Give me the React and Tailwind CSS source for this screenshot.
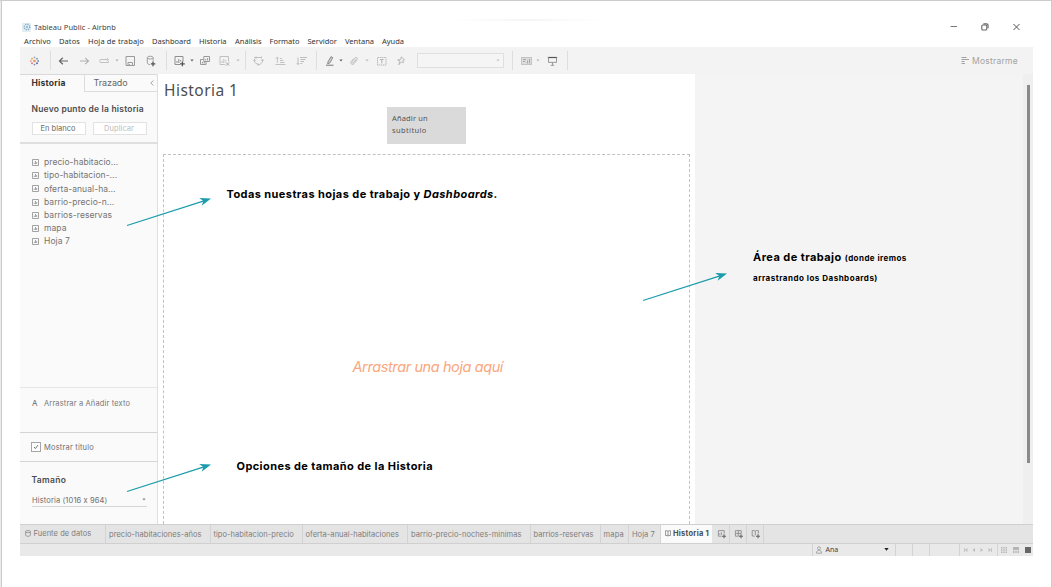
import React from "react";

const menu = [
  ["Archivo", "w-[35px] tracking-[0.1px]"],
  ["Datos", "w-[29px] tracking-[0.09px]"],
  ["Hoja de trabajo", "w-[64px] tracking-[0.12px]"],
  ["Dashboard", "w-[47px]"],
  ["Historia", "w-[36px]"],
  ["Análisis", "w-[34.5px]"],
  ["Formato", "w-[38px]"],
  ["Servidor", "w-[37.5px]"],
  ["Ventana", "w-[37px]"],
  ["Ayuda", "w-[30px]"],
];

const sheets = [
  "precio-habitacio...",
  "tipo-habitacion-...",
  "oferta-anual-ha...",
  "barrio-precio-n...",
  "barrios-reservas",
  "mapa",
  "Hoja 7",
];

const tabs = [
  ["precio-habitaciones-años", "w-[104.5px] pl-[3px]"],
  ["tipo-habitacion-precio", "w-[92px] pl-[3px]"],
  ["oferta-anual-habitaciones", "w-[105.5px] pl-[3px]"],
  ["barrio-precio-noches-minimas", "w-[122.5px] pl-[3px]"],
  ["barrios-reservas", "w-[70px] pl-[3px]"],
  ["mapa", "w-[28.5px] pl-[3px] tracking-[0.2px]"],
  ["Hoja 7", "w-[32px] pl-[3px]"],
];

function Sep({ className }) {
  return <div className={`h-[19px] w-px shrink-0 bg-[#dedede] ${className}`} />;
}

function Ico({ className, children, w = 11 }) {
  return (
    <svg
      viewBox={`0 0 ${w} 12`}
      width={w}
      height="12"
      className={`shrink-0 ${className}`}
      fill="none"
      stroke="currentColor"
      strokeWidth="1"
    >
      {children}
    </svg>
  );
}

function Caret({ className }) {
  return (
    <svg viewBox="0 0 4 3" width="4" height="3" className={`shrink-0 ${className}`} fill="currentColor">
      <path d="M0.3 0.6h3.4L2 2.5z" />
    </svg>
  );
}

function Toolbar() {
  return (
    <div className="flex h-[27px] items-center bg-[#f3f3f3] pl-[9px] pr-[15px]">
      <Ico className="opacity-75">
        <g stroke="none">
          <circle cx="5.5" cy="6" r="1.3" fill="#e8762c" />
          <circle cx="5.5" cy="2.4" r="0.9" fill="#7099a6" />
          <circle cx="5.5" cy="9.6" r="0.9" fill="#5b6591" />
          <circle cx="3" cy="3.7" r="1" fill="#eb912c" />
          <circle cx="8" cy="3.7" r="1" fill="#59879b" />
          <circle cx="3" cy="8.3" r="1" fill="#d9536a" />
          <circle cx="8" cy="8.3" r="1" fill="#1f457e" />
          <circle cx="1.8" cy="6" r="0.9" fill="#e58a80" />
          <circle cx="9.2" cy="6" r="0.9" fill="#5b6591" />
        </g>
      </Ico>
      <Sep className="ml-[10px]" />
      <Ico className="ml-[7px] text-[#666]">
        <path d="M10 6H1.5M4.8 2.8L1.5 6L4.8 9.2" strokeWidth="1.2" />
      </Ico>
      <Ico className="ml-[10px] text-[#b0b0b0]">
        <path d="M1 6h8.5M6.2 2.8L9.5 6L6.2 9.2" strokeWidth="1.1" />
      </Ico>
      <Ico className="ml-[9px] text-[#c2c2c2]">
        <path d="M7 7.5H1.6Q0.8 7.5 0.8 6.8V5.3Q0.8 4.5 1.6 4.5H8.6" />
        <path d="M7.8 2.7L10 4.5L7.8 6.3z" fill="currentColor" stroke="none" />
        <path d="M6.5 7.5h3V6" />
      </Ico>
      <Caret className="ml-[5px] text-[#b5b5b5]" />
      <Ico className="ml-[6px] text-[#9a9a9a]" w={10}>
        <path d="M1 1.5h8.5v9H1zM3 10.5v-3h4.5v3M4.5 10.5v-1.5" />
      </Ico>
      <Ico className="ml-[11px] text-[#a0a0a0]" w={10}>
        <ellipse cx="4.2" cy="2.6" rx="2.9" ry="1.4" />
        <path d="M1.3 2.4v5.6c0 .8 1.2 1.4 2.7 1.6M7.1 2.4v3.4" />
        <path d="M7 6.4v4.8M4.9 8.8h4.4" stroke="#555" strokeWidth="1.3" />
      </Ico>
      <Sep className="ml-[10px]" />
      <Ico className="ml-[7px] text-[#8f8f8f]">
        <path d="M6 9.5H1v-8h8v5M3 8V6M4.8 8V4M6.6 6.5V5" />
        <path d="M8.4 6.4v4.8M6 8.8h4.8" stroke="#555" strokeWidth="1.3" />
      </Ico>
      <Caret className="ml-[5px] text-[#666]" />
      <Ico className="ml-[6px] text-[#9a9a9a]" w={10}>
        <path d="M3.8 1.5h5.7v5H3.8zM5.7 5.5V4M7.6 5.5V3" />
        <path d="M3.5 4.5h-3v5h5.5v-3M2.5 8.5V7M4.2 8.5V7" />
      </Ico>
      <Ico className="ml-[9px] text-[#c0c0c0]">
        <path d="M6 9.5H1v-8h8.5v5M3 8V6M4.8 8V4M6.8 6.5V5" />
        <path d="M7 7.4l3.2 3.2M10.2 7.4L7 10.6" stroke="#a6a6a6" />
      </Ico>
      <Caret className="ml-[6px] text-[#c0c0c0]" />
      <Sep className="ml-[5px]" />
      <Ico className="ml-[7px] text-[#c0c0c0]">
        <path d="M1 2.5h7.5M3 1.5v2.4M8.5 1.5v2M1.5 4v3.2L4.8 9.5M9.5 4.5v2.5L7 9.4M0 5.8l1.5-1.5L3 5.8M8 5.8l1.5-1.5L11 5.8M4 9.5h3M5 8.2v2.6" />
      </Ico>
      <Ico className="ml-[11px] text-[#c2c2c2]">
        <path d="M0.5 9.5h10M2.3 2v6M1 3.6L2.3 2L3.6 3.6M5 3.5h2M5 5.5h3.4M5 7.5h4.6" />
      </Ico>
      <Ico className="ml-[10px] text-[#bdbdbd]">
        <path d="M2 2.5v7M0.7 8L2 9.5L3.3 8M4 2.5h7M4.5 4.5h5M4.5 6.5h3.5M4.5 8.5h1.8" />
      </Ico>
      <Sep className="ml-[9px]" />
      <Ico className="ml-[8px] text-[#8c8c8c]" w={10}>
        <path d="M3 6.8L6 1.6L7.8 2.6L5 7.8L2.6 8.8z" fill="currentColor" fillOpacity=".35" />
        <path d="M1 10.3h7.5" stroke="#a0a0a0" strokeWidth="1.5" />
      </Ico>
      <Caret className="ml-[4px] text-[#666]" />
      <Ico className="ml-[6px] text-[#c0c0c0]" w={10}>
        <path d="M7.2 4.2L4.4 7.8C3.6 8.8 2.3 7.8 3 6.9L6 3C7.2 1.6 9.2 3 8.2 4.5L5 8.7C3.4 10.5 0.8 8.8 2.2 6.6L4.6 3.6" />
      </Ico>
      <Caret className="ml-[6px] text-[#c0c0c0]" />
      <Ico className="ml-[7px] text-[#b8b8b8]">
        <rect x="1.5" y="2.5" width="8.5" height="7.5" strokeDasharray="1.4 .6" />
        <path d="M3.9 4.5h3.8M5.8 4.5v3.9" strokeWidth="1.1" />
      </Ico>
      <Ico className="ml-[9px] text-[#b8b8b8]" w={10}>
        <path d="M5.2 1.8L8.6 4.8L7 5.2L7.3 7.8L5.6 6.8L2.6 9.8L4 6.2L1.6 5L4.8 4.4z" />
      </Ico>
      <div className="ml-[11px] flex h-[15px] w-[87px] shrink-0 items-center justify-end border border-[#dfdfdf] bg-[#f5f5f5] pr-[3px]">
        <Caret className="text-[#c6c6c6]" />
      </div>
      <Sep className="ml-[8px]" />
      <Ico className="ml-[8px] text-[#c4c4c4]">
        <rect x="0.5" y="2.5" width="10" height="7" fill="#dcdcdc" />
        <path d="M2 4.5h3M2 6.5h2M6.5 8.5v-3M8.5 8.5V4" stroke="#a8a8a8" />
      </Ico>
      <Caret className="ml-[4px] text-[#bbb]" />
      <Ico className="ml-[7px] text-[#999]">
        <path d="M0.8 2.5h9.4" stroke="#555" strokeWidth="1.2" />
        <path d="M1.5 2.5v4.9h8V2.5M5.5 7.5v2.5M3.8 10.3h3.4" />
      </Ico>
      <Sep className="ml-[9px]" />
      <div className="ml-auto flex items-center gap-[3px] text-[8.5px] leading-[12px] tracking-[0.25px] text-[#a3a3a3]">
        <svg width="8" height="9" viewBox="0 0 8 9" stroke="#a3a3a3">
          <path d="M0.5 1.5h5M0.5 3.5h7.5M0.5 5.5h3M0.5 7.5h3.5" />
        </svg>
        <span className="pt-px">Mostrarme</span>
      </div>
    </div>
  );
}

function Sidebar() {
  return (
    <div className="flex w-[138px] shrink-0 flex-col border-r border-[#dfdfdf] bg-[#fafafa] text-[#666]">
      <div className="flex h-[18px] border-t border-[#d9d9d9]">
        <div className="w-[64px] pl-[11.5px] text-[8.5px] leading-[17px] font-bold tracking-[0.2px] text-[#333]">Historia</div>
        <div className="flex flex-1 items-center justify-between border-b border-l border-[#dcdcdc] pr-[3px] pl-[8.5px] text-[9px] leading-[16px] text-[#666]">
          <span className="tracking-[-0.08px]">Trazado</span>
          <svg width="4" height="6" viewBox="0 0 4 6" fill="none" stroke="#999" strokeWidth=".9">
            <path d="M3.3 0.5L0.8 3l2.5 2.5" />
          </svg>
        </div>
      </div>
      <div className="mt-[11px] pl-[11.5px] text-[8.5px] leading-[12px] font-semibold tracking-[0.2px] text-[#4c4c4c]">Nuevo punto de la historia</div>
      <div className="mt-[7px] flex gap-[7px] pl-[11.5px] text-[7.5px]">
        <div className="flex h-[13px] w-[54px] items-center justify-center border border-[#e2e2e2] bg-white pr-px text-[#666]">En blanco</div>
        <div className="flex h-[13px] w-[54px] items-center justify-center border border-[#e2e2e2] bg-white pr-px tracking-[0.07px] text-[#bdbdbd]">Duplicar</div>
      </div>
      <div className="mt-[7px] h-[2px] bg-[#dfdfdf]" />
      <div className="mt-[12px] flex flex-col pl-[12px]">
        {sheets.map((s) => (
          <div key={s} className="flex h-[13.2px] items-center gap-[5px] text-[8.5px] tracking-[0.06px] text-[#747474]">
            <svg width="7" height="7" viewBox="0 0 7 7" fill="none" stroke="#999" strokeWidth=".9">
              <path d="M0.5 0.5h6v6h-6zM2.3 5V3.8M3.5 5V2M4.7 5V3" />
            </svg>
            {s}
          </div>
        ))}
      </div>
      <div className="mt-[138.6px] flex h-[45px] border-t border-[#e6e6e6] pt-[10px] pl-[12px] text-[7.5px] leading-[12px]">
        <span className="w-[12px] text-[8px] leading-[11px] text-[#666]">A</span>
        <span className="tracking-[0.14px] text-[#777]">Arrastrar a Añadir texto</span>
      </div>
      <div className="flex h-[30px] items-center border-t border-b border-[#d4d4d4] pl-[11px] text-[7.5px] leading-[12px] tracking-[0.2px] text-[#707070]">
        <span className="mr-[3px] flex h-[10px] w-[10px] items-center justify-center border border-[#a6a6a6] bg-white">
          <svg width="6" height="6" viewBox="0 0 6 6" fill="none" stroke="#666" strokeWidth=".9">
            <path d="M1 3l1.4 1.6L5 1" />
          </svg>
        </span>
        <span className="pt-[2px]">Mostrar título</span>
      </div>
      <div className="mt-[12px] pl-[11.5px] text-[8.5px] leading-[12px] font-semibold tracking-[0.35px] text-[#4c4c4c]">Tamaño</div>
      <div className="mt-[7px] ml-[12px] flex h-[14px] w-[115px] items-center justify-between border-b border-[#d5d5d5] pr-[1px] text-[7.5px] leading-[12px] text-[#6c6c6c]">
        <span className="pt-[3px] tracking-[0.13px] [font-feature-settings:'calt'_0]">Historia (1016 x 964)</span>
        <Caret className="text-[#888]" />
      </div>
    </div>
  );
}

function NewTab({ className, children }) {
  return (
    <div className={`flex items-center justify-center border-r border-[#d3d3d3] pl-[2px] ${className}`}>
      <svg width="10" height="10" viewBox="0 0 10 10" fill="none" stroke="#8c8c8c" strokeWidth=".9">
        {children}
        <path d="M7 5.2v4M5 7.2h4" stroke="#666" strokeWidth="1.1" />
      </svg>
    </div>
  );
}

function TabStrip() {
  return (
    <div className="flex h-[19.5px] border-t border-b border-[#d0d0d0] bg-[#e4e4e4] text-[7.5px] leading-[20px] tracking-[0.05px] whitespace-nowrap text-[#7c7c7c]">
      <div className="flex w-[86px] items-center gap-[2.5px] border-r border-[#d3d3d3] pl-[5px]">
        <svg width="6" height="7" viewBox="0 0 6 7" fill="none" stroke="#8c8c8c" strokeWidth=".8">
          <ellipse cx="3" cy="1.6" rx="2.4" ry="1.1" />
          <path d="M0.6 1.6v3.6c0 1.5 4.8 1.5 4.8 0V1.6" />
        </svg>
        <span className="pt-px">Fuente de datos</span>
      </div>
      {tabs.map(([label, cls]) => (
        <div key={label} className={`shrink-0 border-r border-[#d3d3d3] ${cls}`}>
          {label}
        </div>
      ))}
      <div className="flex w-[51px] shrink-0 items-center gap-[2px] bg-[#fafafa] pl-[4px] font-bold tracking-[0.24px] text-[#4c4c4c]">
        <svg width="6" height="7" viewBox="0 0 6 7" fill="none" stroke="#777" strokeWidth=".8">
          <path d="M0.4 0.8h1.8L3 1.4l.8-.6h1.8v4.6H3.8L3 6.2l-.8-.8H0.4zM3 1.4v4.8" />
        </svg>
        <span className="pt-px">Historia 1</span>
      </div>
      <NewTab className="ml-px w-[17px]">
        <path d="M4.5 7.2H1.4V1.6h5.8v3M2.8 5.8V4.4M4.4 5.8V3.2" />
      </NewTab>
      <NewTab className="w-[17px]">
        <path d="M4.5 7.2H1.4V1.6h5.8v3M1.4 4.4h5.8M4.3 1.6v5.6" />
      </NewTab>
      <NewTab className="w-[17px]">
        <path d="M3.8 7.5L3.2 7H1.2V1.6h2.2l.9.6.9-.6h2.2v3M4.3 2.2v4" />
      </NewTab>
    </div>
  );
}

function StatusBar() {
  return (
    <div className="flex h-[12px] justify-end bg-[#e9e9e9] text-[7px]">
      <div className="flex w-[83px] items-center border-l border-[#d3d3d3] pl-[3px] text-[#444]">
        <svg width="6" height="8" viewBox="0 0 6 8" fill="none" stroke="#999" strokeWidth=".8">
          <circle cx="3" cy="2.3" r="1.5" />
          <path d="M0.5 7.2c0-4 5-4 5 0z" />
        </svg>
        <span className="ml-[4px] pt-px font-['Noto_Sans',sans-serif] leading-[12px]">Ana</span>
        <svg width="5" height="3" viewBox="0 0 5 3" className="mr-[5.5px] ml-auto">
          <path d="M0.3 0h4.4L2.5 2.8z" fill="#222" />
        </svg>
      </div>
      <div className="w-[17px] border-l border-[#d3d3d3]" />
      <div className="w-[17px] border-l border-[#d3d3d3]" />
      <div className="w-[30.5px] border-l border-[#d3d3d3]" />
      <div className="flex w-[38px] items-center border-l border-[#d3d3d3] pl-[4px]">
        <svg width="28" height="4" viewBox="0 0 28 4" fill="#bdbdbd">
          <path d="M0 0h.8v4H0zM3.4 0v4L.9 2zM11 0v4L8.5 2zM16.5 0v4L19 2zM24.5 0v4L27 2zM27.1 0h.8v4h-.8z" />
        </svg>
      </div>
      <div className="flex w-[36px] items-center gap-[6px] border-l border-[#d3d3d3] pl-[3px]">
        <svg width="6" height="6" viewBox="0 0 6 6" fill="#b5b5b5">
          <path d="M0 0h1.4v1.4H0zM2.3 0h1.4v1.4H2.3zM4.6 0H6v1.4H4.6zM0 2.3h1.4v1.4H0zM2.3 2.3h1.4v1.4H2.3zM4.6 2.3H6v1.4H4.6zM0 4.6h1.4V6H0zM2.3 4.6h1.4V6H2.3zM4.6 4.6H6V6H4.6z" />
        </svg>
        <svg width="6" height="6" viewBox="0 0 6 6" fill="#b5b5b5">
          <path d="M0 0h6v3H0zM0 3.8h1.4V6H0zM2.3 3.8h1.4V6H2.3zM4.6 3.8H6V6H4.6z" />
        </svg>
        <div className="h-[6px] w-[6px] bg-[#666]" />
      </div>
    </div>
  );
}

function Arrow({ className }) {
  return (
    <svg width="86" height="32" viewBox="0 0 86 32" className={`absolute ${className}`} fill="none">
      <path d="M1 29.5L78 4.8" stroke="#1a9cac" strokeWidth="1.3" />
      <path d="M85 2.5L73.2 2L77.4 5L75.7 9.7z" fill="#1a9cac" />
    </svg>
  );
}

export default function App() {
  return (
    <div className="relative h-[587px] w-[1052px] overflow-hidden border-t border-r border-[#cccccc] bg-white font-['Inter',sans-serif]">
      <div className="absolute top-0 left-0 h-full w-[2px] border-r border-[#cccccc] bg-[#ececec]" />
      <div className="absolute top-[18px] left-[452px] h-[2px] w-[150px] bg-linear-to-r from-white via-[#f5f5f5] to-white" />
      <div className="flex w-[1033px] flex-col pl-[20px]">
        <div className="mt-[19px] flex h-[14px] items-center font-['Noto_Sans',sans-serif] text-[7.5px] leading-[12px] text-[#444]">
          <span className="ml-[2px] flex h-[9px] w-[9px] items-center justify-center bg-[#e6edf1]">
            <svg width="8" height="8" viewBox="0 0 8 8" fill="none" stroke="#7fb0cd" strokeWidth="1.4">
              <circle cx="4" cy="4" r="2.8" strokeDasharray="1.3 .9" />
              <circle cx="4" cy="4" r="1" fill="#7fb0cd" stroke="none" />
            </svg>
          </span>
          <span className="ml-[3px] tracking-[0.06px]">Tableau Public - Airbnb</span>
          <div className="mr-[13px] ml-auto flex items-center gap-[24px]">
            <svg width="7" height="8" viewBox="0 0 7 8" stroke="#777">
              <path d="M0.5 3.5h6.5" />
            </svg>
            <svg width="8" height="8" viewBox="0 0 8 8" fill="none" stroke="#666" strokeWidth="1.1">
              <rect x="0.8" y="2" width="5" height="5" rx="1" />
              <path d="M2.4 0.9h3q1.7 0 1.7 1.4v3" />
            </svg>
            <svg width="7" height="8" viewBox="0 0 7 8" stroke="#555">
              <path d="M0.5 1l6 6M6.5 1L0.5 7" />
            </svg>
          </div>
        </div>
        <div className="flex h-[13px] pl-[4px] font-['Noto_Sans',sans-serif] text-[7.5px] leading-[14px] whitespace-nowrap text-[#333]">
          {menu.map(([label, cls]) => (
            <span key={label} className={cls}>
              {label}
            </span>
          ))}
        </div>
        <Toolbar />
        <div className="flex h-[450px]">
          <Sidebar />
          <div className="flex w-[536.5px] shrink-0 flex-col bg-white pr-[5px] pl-[5px]">
            <div className="pt-[5px] pl-[1px] font-['Noto_Sans',sans-serif] text-[15.5px] leading-[22px] tracking-[0.45px] text-[#4e4e4e]">Historia 1</div>
            <div className="mt-[6px] ml-[224px] h-[37px] w-[79px] bg-[#dadada] pt-[5px] pl-[5px] font-['Noto_Sans',sans-serif] text-[7.5px] leading-[12px] text-[#555]">
              <div className="tracking-[0.15px]">Añadir un</div>
              <div className="tracking-[0.38px]">subtítulo</div>
            </div>
            <div className="mt-[10px] flex flex-1 justify-center border border-b-0 border-dashed border-[#c2c2c2] pt-[202px]">
              <span className="ml-[3px] text-[14.5px] leading-[20px] tracking-[-0.4px] text-[#f9a77e] italic">Arrastrar una hoja aquí</span>
            </div>
          </div>
          <div className="flex flex-1 justify-end bg-[#f4f4f4]">
            <div className="w-[10px] bg-[#efefef] pt-[11px] pl-[3.5px]">
              <div className="h-[378px] w-[3.5px] bg-[#8a8a8a]" />
            </div>
          </div>
        </div>
        <TabStrip />
        <StatusBar />
      </div>

      <Arrow className="top-[194.5px] left-[126px]" />
      <Arrow className="top-[270px] left-[642px]" />
      <Arrow className="top-[461px] left-[126px]" />
      <p className="absolute top-[185px] left-[226.5px] text-[11px] leading-[16px] font-bold tracking-[0.42px] whitespace-nowrap text-black">
        Todas nuestras hojas de trabajo y <em>Dashboards</em>.
      </p>
      <p className="absolute top-[457px] left-[236.5px] text-[11px] leading-[16px] font-bold tracking-[0.41px] whitespace-nowrap text-black">
        Opciones de tamaño de la Historia
      </p>
      <div className="absolute top-[246px] left-[753px] text-[11px] leading-[21px] font-bold tracking-[0.44px] whitespace-nowrap text-black">
        <p>
          Área de trabajo <span className="text-[8px]">(donde iremos</span>
        </p>
        <p className="text-[8px] leading-[18px] tracking-[0.5px]">arrastrando los Dashboards)</p>
      </div>
    </div>
  );
}
